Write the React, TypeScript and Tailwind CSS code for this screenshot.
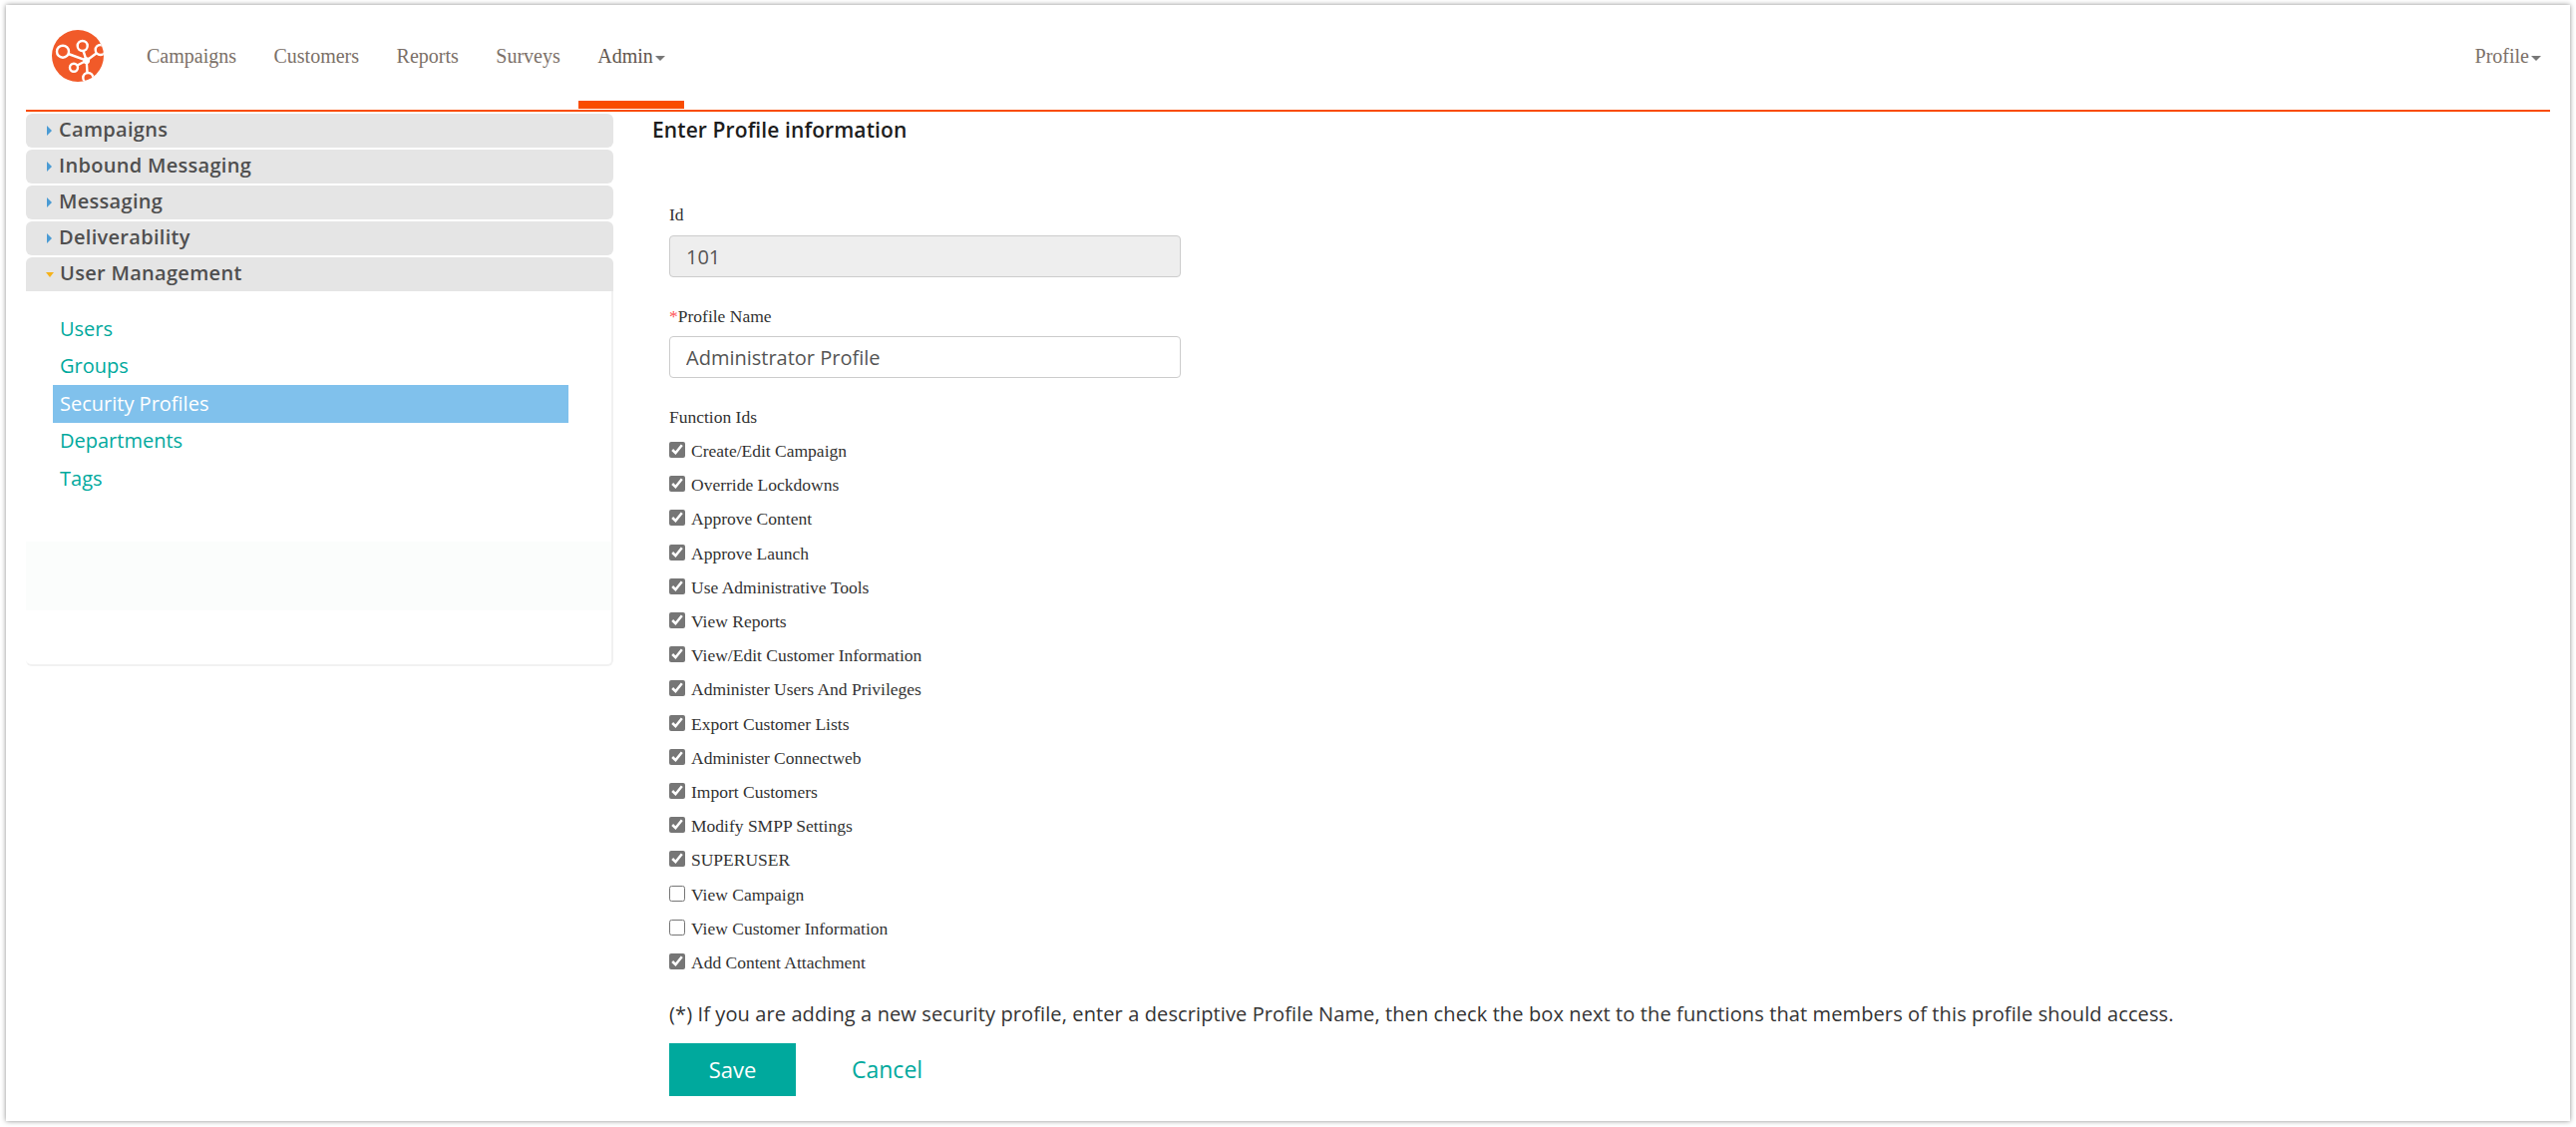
import React from 'react';

const navItems = ['Campaigns', 'Customers', 'Reports', 'Surveys'];
const sections = ['Campaigns', 'Inbound Messaging', 'Messaging', 'Deliverability'];
const links = ['Users', 'Groups', 'Security Profiles', 'Departments', 'Tags'];
const functions = [
  { label: 'Create/Edit Campaign', checked: true },
  { label: 'Override Lockdowns', checked: true },
  { label: 'Approve Content', checked: true },
  { label: 'Approve Launch', checked: true },
  { label: 'Use Administrative Tools', checked: true },
  { label: 'View Reports', checked: true },
  { label: 'View/Edit Customer Information', checked: true },
  { label: 'Administer Users And Privileges', checked: true },
  { label: 'Export Customer Lists', checked: true },
  { label: 'Administer Connectweb', checked: true },
  { label: 'Import Customers', checked: true },
  { label: 'Modify SMPP Settings', checked: true },
  { label: 'SUPERUSER', checked: true },
  { label: 'View Campaign', checked: false },
  { label: 'View Customer Information', checked: false },
  { label: 'Add Content Attachment', checked: true },
];

const Logo = () => (
  <svg width="52" height="52" viewBox="0 0 52 52" className="shrink-0">
    <defs>
      <clipPath id="logo-clip">
        <circle cx="26" cy="26" r="26" />
      </clipPath>
    </defs>
    <circle cx="26" cy="26" r="26" fill="#f15a29" />
    <g clipPath="url(#logo-clip)" fill="none" stroke="#fff" strokeWidth="2.4">
      <path d="M16.5 24 34.7 30.7M31.5 21 34.7 30.7M25.5 35.5 34.7 30.7M44.5 23.5 34.7 30.7M35.5 43 34.7 30.7" />
      <circle cx="11" cy="21.7" r="6" />
      <circle cx="30.7" cy="16" r="5" />
      <circle cx="22" cy="37.7" r="4" />
      <circle cx="48.7" cy="20" r="5" />
      <circle cx="36.3" cy="48" r="5" />
      <circle cx="34.7" cy="30.7" r="3.4" fill="#fff" stroke="none" />
    </g>
  </svg>
);

const Caret = () => (
  <span className="ml-[2px] inline-block h-0 w-0 border-x-[5px] border-t-[5px] border-x-transparent border-t-[#777] align-middle" />
);

const SectionHeader = ({ title, open }: { title: string; open?: boolean }) => (
  <div
    className={`flex h-[34px] items-center bg-[#e5e5e5] pl-[21px] ${open ? 'rounded-t-[6px]' : 'rounded-[6px]'}`}
  >
    {open ? (
      <span className="ml-[-1px] mr-[6px] h-0 w-0 border-x-[4px] border-t-[5px] border-x-transparent border-t-[#f5b21b]" />
    ) : (
      <span className="mr-[7px] h-0 w-0 border-y-[5px] border-l-[5px] border-y-transparent border-l-[#4a9bd4]" />
    )}
    <span className="mt-[-2px] text-[20px] font-semibold tracking-[0.3px] text-[#4f4f4f]">{title}</span>
  </div>
);

export default function App() {
  return (
    <div className="h-[1130px] w-full bg-white pb-[6px] pl-[6px] pr-[6px] pt-[5px] font-['Open_Sans',sans-serif]">
      <div className="flex h-full flex-col bg-white px-[20px] shadow-[0_0_5px_rgba(0,0,0,0.45)]">
        {/* top nav */}
        <header className="flex h-[105px] shrink-0 pl-[26px] font-['Liberation_Serif',serif] text-[20px]">
          <div className="mt-[25px]">
            <Logo />
          </div>
          <nav className="ml-[43px] flex flex-1 text-[#7b7068]">
            {navItems.map(item => (
              <a key={item} className="mr-[37.5px] mt-[38px] leading-[26px]">
                {item}
              </a>
            ))}
            <div className="ml-[-19px] flex h-[104px] w-[106px] flex-col justify-between border-b-[8px] border-[#f94c00] pl-[19px] pt-[38px] text-[#5f554d]">
              <span className="leading-[26px]">
                Admin
                <Caret />
              </span>
            </div>
          </nav>
          <div className="mr-[9px] mt-[38px] leading-[26px] text-[#7b7068]">
            Profile
            <Caret />
          </div>
        </header>
        <div className="h-[2px] shrink-0 bg-[#f94c00]" />

        <div className="flex flex-1">
          {/* side menu */}
          <aside className="w-[589px] shrink-0 pt-[2px]">
            <div className="flex flex-col gap-[2px]">
              {sections.map(s => (
                <SectionHeader key={s} title={s} />
              ))}
              <SectionHeader title="User Management" open />
            </div>
            <div className="h-[376px] rounded-b-[6px] border-b-2 border-r-2 border-[#f1f1f1] bg-white">
              <ul className="flex w-[544px] flex-col pl-[27px] pt-[19px] text-[20px] text-[#00a99d]">
                {links.map(link => (
                  <li
                    key={link}
                    className={`flex h-[37.5px] items-center pl-[7px] ${
                      link === 'Security Profiles' ? 'bg-[#80c1ec] text-white' : ''
                    }`}
                  >
                    {link}
                  </li>
                ))}
              </ul>
              <div className="mt-[44px] h-[69px] bg-[#fbfdfc]" />
            </div>
          </aside>

          {/* profile form */}
          <main className="flex-1 pl-[39px]">
            <h1 className="mt-[6px] text-[21px] font-semibold leading-[24px] tracking-[0.1px] text-[#1d1d1d]">
              Enter Profile information
            </h1>
            <form className="pl-[17px] pt-[61px] font-['Liberation_Serif',serif] text-[17.5px] text-[#333]">
              <label className="block leading-[24px]">Id</label>
              <input
                readOnly
                value="101"
                className="mt-[9px] block h-[42px] w-[513px] rounded-[4px] border border-[#ccc] bg-[#eee] px-[16px] font-['Open_Sans',sans-serif] text-[20px] text-[#555]"
              />
              <label className="mt-[27px] block leading-[24px]">
                <span className="text-[#f55]">*</span>Profile Name
              </label>
              <input
                readOnly
                value="Administrator Profile"
                className="mt-[8px] block h-[42px] w-[513px] rounded-[4px] border border-[#ccc] bg-white px-[16px] font-['Open_Sans',sans-serif] text-[20px] text-[#555]"
              />
              <label className="mt-[27px] block leading-[24px]">Function Ids</label>
              <div className="mt-[5px] flex flex-col">
                {functions.map(fn => (
                  <label key={fn.label} className="flex h-[34.2px] items-center">
                    <input
                      type="checkbox"
                      readOnly
                      checked={fn.checked}
                      className="m-0 mb-[2px] h-[16px] w-[16px] accent-[#767676]"
                    />
                    <span className="ml-[6px] leading-[24px]">{fn.label}</span>
                  </label>
                ))}
              </div>
              <p className="mt-[22px] font-['Open_Sans',sans-serif] text-[20px] leading-[26px] tracking-[0.11px] text-[#333]">
                (*) If you are adding a new security profile, enter a descriptive Profile Name, then check the box next to
                the functions that members of this profile should access.
              </p>
              <div className="mt-[16px] flex items-center font-['Open_Sans',sans-serif]">
                <button
                  type="button"
                  className="h-[53px] w-[127px] bg-[#00a99d] text-[22px] font-medium text-white"
                >
                  Save
                </button>
                <a className="ml-[56px] text-[23px] text-[#00a99d]">Cancel</a>
              </div>
            </form>
          </main>
        </div>
      </div>
    </div>
  );
}
